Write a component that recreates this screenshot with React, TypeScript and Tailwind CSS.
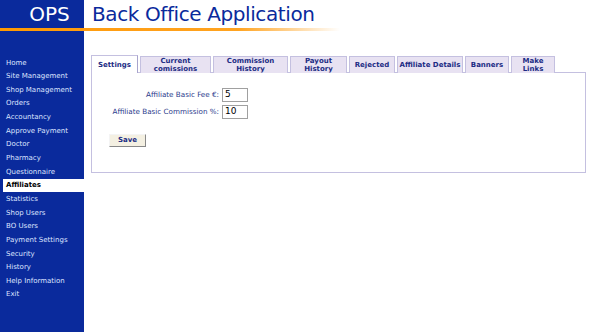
import React from "react";

const menu = [
  "Home",
  "Site Management",
  "Shop Management",
  "Orders",
  "Accountancy",
  "Approve Payment",
  "Doctor",
  "Pharmacy",
  "Questionnaire",
  "Affiliates",
  "Statistics",
  "Shop Users",
  "BO Users",
  "Payment Settings",
  "Security",
  "History",
  "Help Information",
  "Exit",
];

const tabs: { label: string[]; w: string }[] = [
  { label: ["Settings"], w: "w-[47px]" },
  { label: ["Current", "comissions"], w: "w-[71px]" },
  { label: ["Commission", "History"], w: "w-[75px]" },
  { label: ["Payout", "History"], w: "w-[57px]" },
  { label: ["Rejected"], w: "w-[46px]" },
  { label: ["Affiliate Details"], w: "w-[66px]" },
  { label: ["Banners"], w: "w-[44px]" },
  { label: ["Make", "Links"], w: "w-[44px]" },
];

export default function App() {
  const font = { fontFamily: '"DejaVu Sans", Verdana, sans-serif' };
  return (
    <div className="flex h-[332px] w-[600px] flex-col overflow-hidden bg-white" style={font}>
      {/* header */}
      <div className="flex h-[28px] shrink-0">
        <div className="flex w-[84px] items-center justify-center bg-[#0a2a9c] pl-[15px] text-[20px] leading-none text-white">
          OPS
        </div>
        <div className="flex items-center pl-[8px] text-[20px] leading-none tracking-[-0.4px] text-[#0a2a9c]">
          Back Office Application
        </div>
      </div>
      <div className="h-[3px] w-[340px] shrink-0 bg-gradient-to-r from-[#ff9900] via-[#ffa320] via-70% to-transparent" />

      <div className="flex flex-1">
        {/* sidebar */}
        <nav className="flex w-[84px] flex-col bg-[#0a2a9c] pt-[25px]">
          {menu.map((m) =>
            m === "Affiliates" ? (
              <div
                key={m}
                className="ml-[3px] flex h-[13.65px] items-center bg-white pl-[3px] text-[7px] font-bold text-black"
              >
                {m}
              </div>
            ) : (
              <div key={m} className="flex h-[13.65px] items-center pl-[6px] text-[7px] text-[#dde4ff]">
                {m}
              </div>
            )
          )}
        </nav>

        {/* content */}
        <main className="flex-1 pl-[7px] pt-[24px]">
          <div className="flex items-end gap-[2px]">
            {tabs.map((t, i) =>
              i === 0 ? (
                <div
                  key={i}
                  className={`${t.w} relative z-10 flex h-[18px] items-center justify-center border border-b-0 border-[#c4c0e0] border-r-[#a8a4cc] bg-white text-[7px] font-bold leading-[8px] text-[#1c2c84]`}
                >
                  {t.label[0]}
                </div>
              ) : (
                <div
                  key={i}
                  className={`${t.w} flex h-[17px] flex-col items-center justify-center border border-b-0 border-[#c4c0e0] bg-[#e8e2f2] text-[7px] font-bold leading-[8px] text-[#1c2c84]`}
                >
                  {t.label.map((l) => (
                    <span key={l}>{l}</span>
                  ))}
                </div>
              )
            )}
          </div>
          <div className="-mt-px h-[101px] w-[495px] border border-[#c4c0e0] pt-[15px] text-[7.2px] text-[#2a3a8c]">
            <div className="flex items-center">
              <div className="w-[128px] pr-[1px] text-right">Affiliate Basic Fee €:</div>
              <div className="ml-[2px] flex h-[14px] w-[26px] items-center border border-[#a0a0a0] bg-white pl-[2px] text-[9px] text-black">
                5
              </div>
            </div>
            <div className="mt-[3px] flex items-center">
              <div className="w-[128px] pr-[1px] text-right">Affiliate Basic Commission %:</div>
              <div className="ml-[2px] flex h-[14px] w-[26px] items-center border border-[#a0a0a0] bg-white pl-[2px] text-[9px] text-black">
                10
              </div>
            </div>
            <div className="ml-[17px] mt-[15px] flex h-[13px] w-[37px] items-center justify-center border border-[#f4f4f4] border-b-[#888] border-r-[#888] bg-[#f4f0e2] text-[7px] font-bold text-[#1c2c84]">
              Save
            </div>
          </div>
        </main>
      </div>
    </div>
  );
}
